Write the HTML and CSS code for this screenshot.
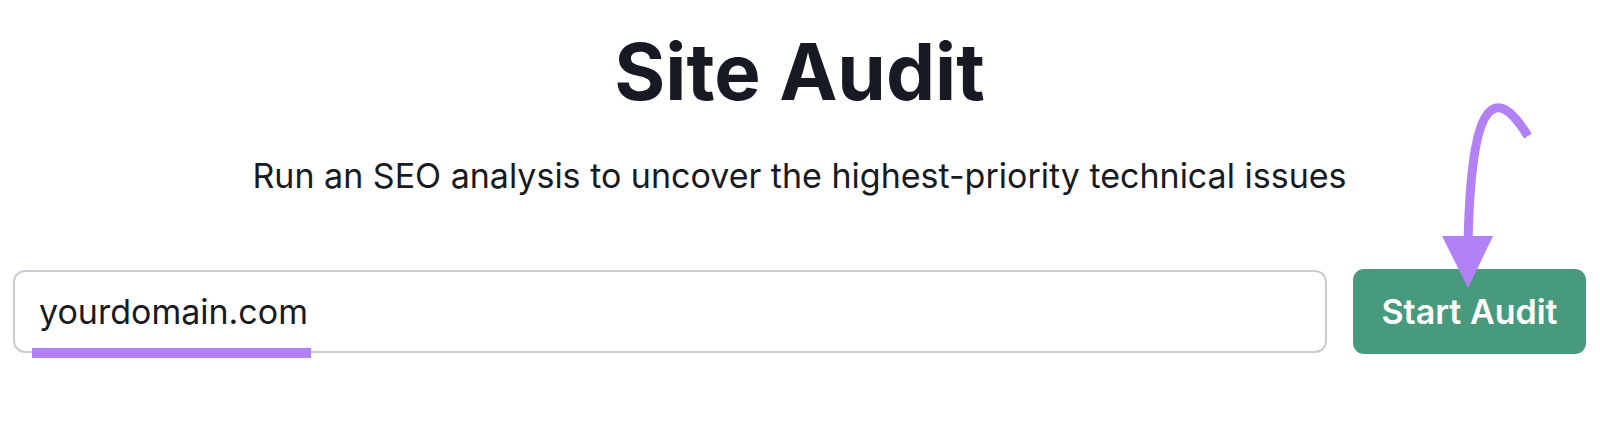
FILE: index.html
```html
<!DOCTYPE html>
<html lang="en">
<head>
  <meta charset="UTF-8">
  <title>Site Audit</title>
  <link rel="stylesheet" href="styles.css">
</head>
<body>
  <div id="auditPage">
    <h1 class="title">Site Audit</h1>
    <p class="subtitle">Run an SEO analysis to uncover the highest-priority technical issues</p>
    <!-- Domain input row -->
    <form class="auditForm">
      <div class="domainField">
        <span class="domainText">yourdomain.com</span>
        <span class="domainMark"></span>
      </div>
      <button type="button" class="startButton">Start Audit</button>
    </form>
    <!-- Hand-drawn pointer onto the button -->
    <svg class="pointer" width="100" height="200" viewBox="0 0 100 200">
      <path d="M94 46 C 80 24, 70 16, 62 18 C 44 22, 36 70, 34 152" fill="none" stroke="#b381f6" stroke-width="9"/>
      <polygon points="8,146 59,146 34,198" fill="#b381f6"/>
    </svg>
  </div>
</body>
</html>
```

FILE: styles.css
```css
/* Basic styling */
body {
  margin: 0;
  font-family: Inter, "Noto Sans", sans-serif;
  background: #fff;
  color: #171a22;
}
#auditPage {
  position: relative;
  padding: 0 14px 0 13px;
  height: 422px;
}
.title {
  margin: 0;
  padding-top: 26px;
  text-align: center;
  font-size: 78px;
  line-height: 92px;
  font-weight: 700;
}
.subtitle {
  margin: 40px 0 0;
  text-align: center;
  font-size: 34px;
  line-height: 36px;
}
/* Input row using flexbox */
.auditForm {
  display: flex;
  gap: 26px;
  margin-top: 75px;
  align-items: center;
}
.domainField {
  position: relative;
  flex: 1;
  height: 79px;
  border: 2px solid #c9ccd3;
  border-radius: 12px;
  display: flex;
  align-items: center;
  padding-left: 24px;
}
.domainText {
  font-size: 34px;
  color: #171a22;
}
.domainMark {
  position: absolute;
  left: 17px;
  width: 279px;
  top: 76px;
  height: 10px;
  background: #b381f6;
}
.startButton {
  width: 233px;
  height: 85px;
  border: none;
  border-radius: 11px;
  background: #479a7e;
  color: #fff;
  font-family: Inter, "Noto Sans", sans-serif;
  font-size: 34px;
  font-weight: 600;
  padding: 0;
}
.pointer {
  position: absolute;
  left: 1434px;
  top: 90px;
}
```
